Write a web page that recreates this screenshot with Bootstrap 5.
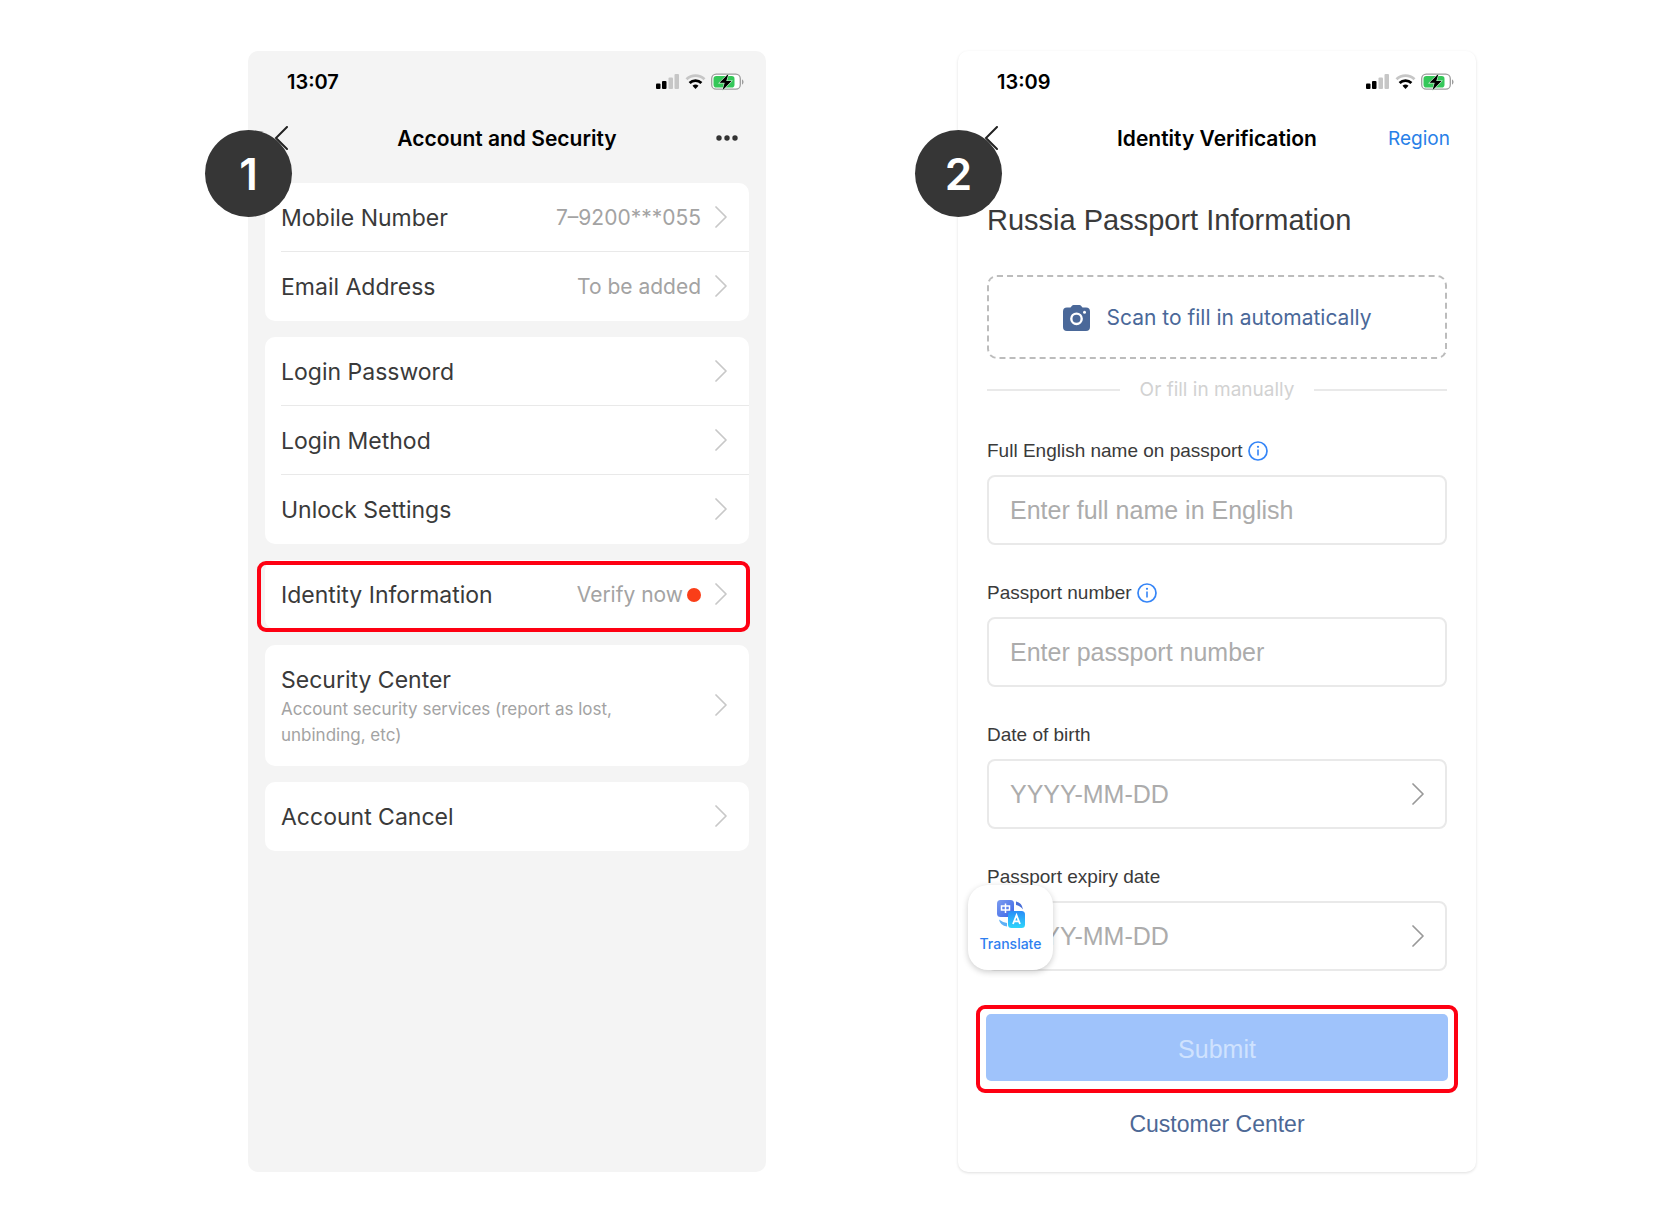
<!DOCTYPE html>
<html lang="en">
<head>
<meta charset="utf-8">
<meta name="viewport" content="width=device-width, initial-scale=1">
<title>Identity verification guide</title>
<link href="https://cdn.jsdelivr.net/npm/bootstrap@5.3.0/dist/css/bootstrap.min.css" rel="stylesheet">
<style>
  :root { --ui: Inter, "Liberation Sans", sans-serif; --helv: "Liberation Sans", Arial, sans-serif; }
  body { font-family: var(--ui); color: #3a3a3a; background: #fff; }
  a { text-decoration: none; }
  svg { flex: none; display: block; }
  .guide { max-width: 1272px; padding-top: 51px; padding-bottom: 50px; gap: 148px; }
  .step { flex: 1 1 0; min-width: 480px; padding-left: 44px; }
  .phone { border-radius: 10px; height: 100%; }
  .phone-grey { background: #f4f4f4; }
  .phone-white { background: #fff; padding-bottom: 33px; box-shadow: 0 1px 3px rgba(0,0,0,.13); }
  .step-num { left: -43px; top: 79px; width: 87px; height: 87px; background: #363636; color: #fff;
    font-size: 44px; font-weight: 600; line-height: 1; z-index: 2; }
  .status { height: 62px; padding: 0 22px 0 39px; font-size: 20px; font-weight: 600; line-height: 24px; color: #000; }
  .topbar { display: grid; grid-template-columns: 1fr auto 1fr; align-items: center; height: 50px; padding: 0 26px; }
  .topbar h1 { font-size: 21px; line-height: 28px; font-weight: 600; color: #000; margin: 0; padding-top: 2px; }
  .topbar a { font-size: 19px; line-height: 24px; padding-top: 2px; color: #2880e8; }
  .plain-btn { background: none; border: 0; padding: 0; }

  .menu { padding: 20px 17px 0; gap: 16px; }
  .menu .list-group { border-radius: 10px; background: #fff; }
  .menu .list-group-item { border: 0; padding: 0 0 0 16px; background: none; color: #3a3a3a; }
  .menu-row { padding: 18px 22px 18px 0; gap: 14px; font-size: 23px; line-height: 32px; border-bottom: 1px solid transparent; }
  .menu-row > :not(svg) { padding-top: 1px; margin-bottom: -1px; }
  .list-group-item:not(:last-child) .menu-row { border-bottom-color: #e9e9e9; }
  .menu-value { font-size: 21px; color: #a3a3a3; gap: 4px; }
  .menu-note { font-size: 17px; line-height: 26px; color: #a3a3a3; max-width: 350px; }
  .alert-dot { width: 14px; height: 14px; background: #fa3e18; }
  .frame-red { border: 4px solid #fe0012; border-radius: 9px; }
  .frame-over { inset: 1px -1px -3px -8px; pointer-events: none; }

  .passport { padding: 39px 29px 0; }
  .passport h2 { font-family: var(--helv); font-size: 29px; line-height: 36px; font-weight: 400; margin: 0 0 37px; }
  .scan-btn { border: 2px dashed #bcbcbc; border-radius: 10px; background: #fff; color: #4a6899;
    padding: 27px 0 25px; gap: 17px; font-size: 21px; line-height: 28px; }
  .or-line { gap: 20px; margin: 19px 0 37px; font-size: 19px; line-height: 24px; color: #d2d2d2; }
  .or-line::before, .or-line::after { content: ""; flex: 1; height: 2px; background: #e9e9e9; }
  .field { margin-bottom: 36px; font-family: var(--helv); }
  .field-head { gap: 5px; margin-bottom: 12px; }
  .field label { font-size: 19px; line-height: 24px; }
  .field-box { border: 2px solid #e9e9e9; border-radius: 8px; padding: 0 21px; background: #fff; }
  .field-box input { flex: 1; min-width: 0; border: 0; outline: 0; background: none; padding: 17px 0; height: 66px;
    font-size: 25px; line-height: 32px; color: #333; }
  .field-box input::placeholder { color: #acacac; opacity: 1; }
  .translate { left: -19px; top: 20px; width: 85px; height: 85px; border: 0; border-radius: 20px; background: #fff;
    box-shadow: 0 2px 6px rgba(0,0,0,.2); font-family: var(--ui); font-size: 14px; line-height: 18px; font-weight: 500;
    color: #2f7ff0; gap: 7px; padding: 0 0 2px; z-index: 2; }
  .submit-frame { margin: -2px -11px 16px; padding: 5px 6px 8px; }
  .submit-btn, .submit-btn:disabled { background: #9fc3fb; color: #cfe2fe; border: 0; border-radius: 5px; opacity: 1;
    font-family: var(--helv); font-size: 25px; line-height: 31px; padding: 20px 0 16px; }
  .help-link { font-family: var(--helv); font-size: 23px; line-height: 30px; color: #4d6895; }
</style>
</head>
<body>
<svg width="0" height="0" class="position-absolute" aria-hidden="true">
  <defs>
    <linearGradient id="gTop" x1="0" y1="0" x2="1" y2="1"><stop offset="0" stop-color="#7c9cf0"/><stop offset="1" stop-color="#3a64e6"/></linearGradient>
    <linearGradient id="gLow" x1="0" y1="0" x2="0" y2="1"><stop offset="0" stop-color="#2a8cf8"/><stop offset="1" stop-color="#2ed6fb"/></linearGradient>
    <symbol id="chev" viewBox="0 0 12 22"><path d="M1 1l10 10L1 21" fill="none" stroke="currentColor" stroke-width="1.7" stroke-linecap="round" stroke-linejoin="round"/></symbol>
    <symbol id="back" viewBox="0 0 14 24"><path d="M13 1L2 12l11 11" fill="none" stroke="#222" stroke-width="2" stroke-linecap="round"/></symbol>
    <symbol id="phoneState" viewBox="0 0 88 18">
      <rect x="0" y="10.500" width="4.500" height="5.500" rx="1"/><rect x="6" y="8" width="4.500" height="8" rx="1"/>
      <rect x="12.500" y="4.500" width="4.500" height="11.500" rx="1" fill="#c6c6c6"/><rect x="18.500" y="1" width="4.500" height="15" rx="1" fill="#c6c6c6"/>
      <path d="M30.500 6.300a13 13 0 0 1 18 0" fill="none" stroke="#c6c6c6" stroke-width="2.800"/>
      <path d="M33.600 10a8.500 8.500 0 0 1 11.800 0" fill="none" stroke="#000" stroke-width="2.800"/>
      <path d="M36.500 12.800a4.500 4.500 0 0 1 6 0l-3 3.200z"/>
      <rect x="55.700" y="1.200" width="28.600" height="15" rx="4.500" fill="#fff" stroke="#9d9d9d" stroke-width="1.300"/>
      <rect x="57.500" y="3" width="21" height="11.500" rx="2.800" fill="#35c759"/>
      <path d="M86 6.500c2 .6 2 4.400 0 5z" fill="#9d9d9d"/>
      <path d="M72.500 .8l-9 9h5.200l-2.200 7.400 9-9.200h-5.200z" stroke="#d9f5df" stroke-width="1.200"/><path d="M72.500 .8l-9 9h5.200l-2.200 7.400 9-9.200h-5.200z"/>
    </symbol>
    <symbol id="info" viewBox="0 0 20 20"><circle cx="10" cy="10" r="9" fill="none" stroke="#3585f7" stroke-width="1.700"/><circle cx="10" cy="5.800" r="1.100" fill="#3585f7"/><path d="M10 8.500v6" stroke="#3585f7" stroke-width="1.600"/></symbol>
  </defs>
</svg>

<main class="guide mx-auto d-flex">
  <section class="step">
    <div class="phone phone-grey position-relative">
      <span class="step-num position-absolute rounded-circle d-flex align-items-center justify-content-center">1</span>
      <div class="status d-flex align-items-center justify-content-between">
        <span>13:07</span>
        <svg width="88" height="18" aria-hidden="true"><use href="#phoneState"/></svg>
      </div>
      <header class="topbar">
        <button class="plain-btn text-start" type="button" aria-label="Back"><svg width="14" height="24"><use href="#back"/></svg></button>
        <h1>Account and Security</h1>
        <button class="plain-btn ms-auto" type="button" aria-label="More"><svg width="24" height="6" fill="#333"><circle cx="3" cy="3" r="2.700"/><circle cx="11" cy="3" r="2.700"/><circle cx="19" cy="3" r="2.700"/></svg></button>
      </header>
      <nav class="menu d-flex flex-column">
        <div class="list-group">
          <a href="#" class="list-group-item"><div class="menu-row d-flex align-items-center"><span class="me-auto">Mobile Number</span><span class="menu-value">7–9200***055</span><svg width="12" height="22" color="#c8c8c8"><use href="#chev"/></svg></div></a>
          <a href="#" class="list-group-item"><div class="menu-row d-flex align-items-center"><span class="me-auto">Email Address</span><span class="menu-value">To be added</span><svg width="12" height="22" color="#c8c8c8"><use href="#chev"/></svg></div></a>
        </div>
        <div class="list-group">
          <a href="#" class="list-group-item"><div class="menu-row d-flex align-items-center"><span class="me-auto">Login Password</span><svg width="12" height="22" color="#c8c8c8"><use href="#chev"/></svg></div></a>
          <a href="#" class="list-group-item"><div class="menu-row d-flex align-items-center"><span class="me-auto">Login Method</span><svg width="12" height="22" color="#c8c8c8"><use href="#chev"/></svg></div></a>
          <a href="#" class="list-group-item"><div class="menu-row d-flex align-items-center"><span class="me-auto">Unlock Settings</span><svg width="12" height="22" color="#c8c8c8"><use href="#chev"/></svg></div></a>
        </div>
        <div class="list-group position-relative">
          <a href="#" class="list-group-item"><div class="menu-row d-flex align-items-center"><span class="me-auto">Identity Information</span><span class="menu-value d-flex align-items-center">Verify now<span class="alert-dot rounded-circle"></span></span><svg width="12" height="22" color="#c8c8c8"><use href="#chev"/></svg></div></a>
          <div class="frame-red frame-over position-absolute"></div>
        </div>
        <div class="list-group">
          <a href="#" class="list-group-item"><div class="menu-row d-flex align-items-center"><div class="me-auto">Security Center<div class="menu-note">Account security services (report as lost, unbinding, etc)</div></div><svg width="12" height="22" color="#c8c8c8"><use href="#chev"/></svg></div></a>
        </div>
        <div class="list-group">
          <a href="#" class="list-group-item"><div class="menu-row d-flex align-items-center"><span class="me-auto">Account Cancel</span><svg width="12" height="22" color="#c8c8c8"><use href="#chev"/></svg></div></a>
        </div>
      </nav>
    </div>
  </section>

  <section class="step">
    <div class="phone phone-white position-relative">
      <span class="step-num position-absolute rounded-circle d-flex align-items-center justify-content-center">2</span>
      <div class="status d-flex align-items-center justify-content-between">
        <span>13:09</span>
        <svg width="88" height="18" aria-hidden="true"><use href="#phoneState"/></svg>
      </div>
      <header class="topbar">
        <button class="plain-btn text-start" type="button" aria-label="Back"><svg width="14" height="24"><use href="#back"/></svg></button>
        <h1>Identity Verification</h1>
        <a href="#" class="ms-auto">Region</a>
      </header>
      <form class="passport">
        <h2>Russia Passport Information</h2>
        <button type="button" class="scan-btn w-100 d-flex align-items-center justify-content-center">
          <svg width="27" height="26" viewBox="0 0 27 26" aria-hidden="true"><path fill="#4a6899" d="M4 2.500h3.500L9 .8Q9.500 0 10.500 0h6q1 0 1.500.8l1.500 1.700H23q4 0 4 4V22q0 4-4 4H4q-4 0-4-4V6.500q0-4 4-4z"/><circle cx="13.500" cy="13.800" r="5.200" fill="none" stroke="#fff" stroke-width="2.400"/><circle cx="21.500" cy="7.200" r="1.500" fill="#fff"/></svg>
          Scan to fill in automatically
        </button>
        <div class="or-line d-flex align-items-center">Or fill in manually</div>
        <div class="field">
          <div class="field-head d-flex align-items-center"><label for="fullName">Full English name on passport</label><svg width="20" height="20"><use href="#info"/></svg></div>
          <div class="field-box d-flex align-items-center"><input id="fullName" type="text" placeholder="Enter full name in English"></div>
        </div>
        <div class="field">
          <div class="field-head d-flex align-items-center"><label for="passNo">Passport number</label><svg width="20" height="20"><use href="#info"/></svg></div>
          <div class="field-box d-flex align-items-center"><input id="passNo" type="text" placeholder="Enter passport number"></div>
        </div>
        <div class="field">
          <div class="field-head d-flex align-items-center"><label for="birth">Date of birth</label></div>
          <div class="field-box d-flex align-items-center"><input id="birth" type="text" placeholder="YYYY-MM-DD"><svg width="12" height="22" color="#999"><use href="#chev"/></svg></div>
        </div>
        <div class="field position-relative">
          <div class="field-head d-flex align-items-center"><label for="expiry">Passport expiry date</label></div>
          <div class="field-box d-flex align-items-center"><input id="expiry" type="text" placeholder="YYYY-MM-DD"><svg width="12" height="22" color="#999"><use href="#chev"/></svg></div>
          <button type="button" class="translate position-absolute d-flex flex-column align-items-center justify-content-center">
            <svg width="28" height="28" viewBox="0 0 28 28" aria-hidden="true">
              <rect x="0" y="0" width="17" height="17" rx="3.500" fill="url(#gTop)"/>
              <path d="M19 1.500q6 1 7 8q-3-4-7-4.500z" fill="#4a6fd8"/><path d="M2 19.500q1 6 8 7v-3.500q-5-1-8-3.500z" fill="#5fb0f5"/>
              <rect x="11" y="11" width="17" height="17" rx="3.500" fill="url(#gLow)"/>
              <path d="M4.500 6h8v4h-8zM8.500 3.500v9.500" fill="none" stroke="#fff" stroke-width="1.500"/>
              <path d="M16 24l3.500-8.800 3.500 8.800M17.200 21.300h4.600" fill="none" stroke="#fff" stroke-width="1.800"/>
            </svg>
            Translate
          </button>
        </div>
        <div class="frame-red submit-frame"><button type="submit" class="btn submit-btn w-100 d-block" disabled>Submit</button></div>
        <div class="text-center"><a href="#" class="help-link">Customer Center</a></div>
      </form>
    </div>
  </section>
</main>
<script src="https://cdn.jsdelivr.net/npm/bootstrap@5.3.0/dist/js/bootstrap.bundle.min.js"></script>
</body>
</html>
